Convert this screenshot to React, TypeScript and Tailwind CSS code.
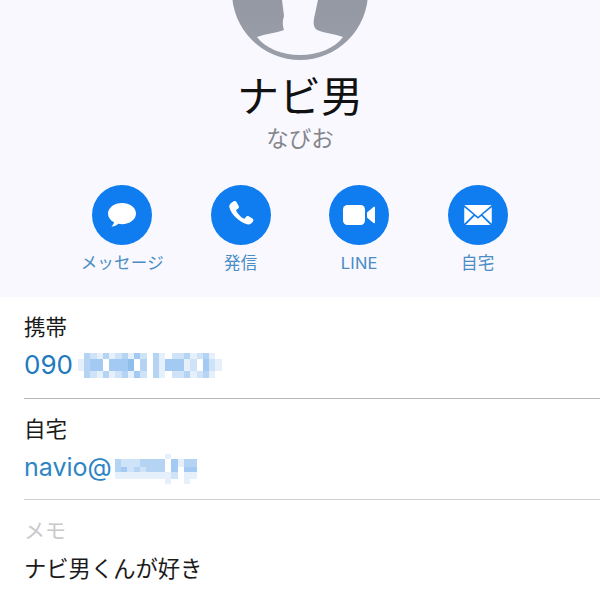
import React from "react";

const font = "font-['Inter','Noto_Sans_CJK_JP',sans-serif]";
const shades: Record<string, string> = {
  ".": "bg-transparent",
  a: "bg-[#e6f0fb]",
  b: "bg-[#cfe3f8]",
  c: "bg-[#b5d4f4]",
  d: "bg-[#a3caf2]",
  e: "bg-[#8fbdec]",
};

const phoneRows: [string, string][] = [
  [".cbacabcadb.ca.bbcabca.", "h-[6px]"],
  ["acdd.ddde.c.cadddab.dba", "h-[12px]"],
  [".cbacabcadb.ca.bbcabca.", "h-[7px]"],
];
const mailRows: [string, string][] = [
  ["........a.....", "h-[5px]"],
  ["cbbbcccc.dacc.", "h-[8px]"],
  ["cdbcbccc.d.dd.", "h-[5px]"],
  ["aaaaaaaaab.aa.", "h-[7px]"],
  ["........a..a..", "h-[5px]"],
];

function Mosaic({ rows, cell }: { rows: [string, string][]; cell: string }) {
  return (
    <div className="flex flex-col">
      {rows.map(([row, h], i) => (
        <div key={i} className={`flex ${h}`}>
          {row.split("").map((c, j) => (
            <span key={j} className={`${cell} ${shades[c]}`} />
          ))}
        </div>
      ))}
    </div>
  );
}

function Action({ label, children }: { label: string; children: React.ReactNode }) {
  return (
    <div className="flex w-[118.5px] flex-col items-center">
      <div className="flex h-[60px] w-[60px] items-center justify-center rounded-full bg-[#0f7cf0]">
        {children}
      </div>
      <div className="mt-[8px] whitespace-nowrap text-[16.5px] leading-[20px] tracking-[0.2px] text-[#4a8cc4]">{label}</div>
    </div>
  );
}

export default function App() {
  return (
    <div className={`h-[610px] w-[600px] overflow-hidden bg-white ${font}`}>
      <div className="flex h-[297px] flex-col items-center bg-[#f8f8fe]">
        <div className="h-[60px] w-full overflow-hidden">
          <svg width="600" height="60" viewBox="0 0 600 60" className="block">
            <defs>
              <linearGradient id="av" x1="0" y1="0" x2="0" y2="1">
                <stop offset="0" stopColor="#8e929d" />
                <stop offset="1" stopColor="#9a9ea8" />
              </linearGradient>
            </defs>
            <circle cx="300" cy="-8" r="68" fill="url(#av)" />
            <path
              d="M282 0 L284 16 C282 22 283 27 284 30 C276 33 265 34 257 37 C265 48 282 55 300 55 C318 55 335 48 343 37 C335 34 324 33 317 30 C313 27 313 22 315 14 L318 0 Z"
              fill="#f8f8fe"
            />
          </svg>
        </div>
        <h1 className="mt-[12px] text-[42px] font-normal leading-[50px] text-[#111111]">ナビ男</h1>
        <div className="mt-[3px] text-[22.500px] leading-[28px] text-[#85858b]">なびお</div>
        <div className="mt-[32px] flex w-full justify-center">
          <Action label="メッセージ">
            <svg width="34" height="30" viewBox="0 0 34 30">
              <path
                d="M17 3C9.300 3 3 7.700 3 13.500c0 3.700 2.300 6.900 6 8.800-.3 1.700-1.200 3.100-2.600 4.100 2.600.1 5.300-.9 7-2.600 1.100.2 2.400.4 3.600.4 7.700 0 14-4.700 14-10.700S24.700 3 17 3z"
                fill="#fff"
              />
            </svg>
          </Action>
          <Action label="発信">
            <svg width="32" height="32" viewBox="0 0 32 32">
              <path
                d="M8.800 2.200c1-.5 2.100-.2 2.700.8l2.200 3.900c.5.900.3 1.900-.5 2.600l-1.700 1.300c-.4.300-.4.700-.2 1.100 1.700 3.200 4.200 5.900 7.300 7.700.4.200.8.200 1.100-.2l1.400-1.700c.7-.8 1.700-1 2.600-.5l3.700 2.300c1 .6 1.300 1.800.7 2.800-1.100 1.900-3 3.500-5.200 3.200C14.800 23.900 5.800 14.900 4.300 8c-.4-2.400 2.300-4.800 4.500-5.800z"
                fill="#fff"
              />
            </svg>
          </Action>
          <Action label="LINE">
            <svg width="34" height="22" viewBox="0 0 34 22">
              <rect x="1" y="1" width="22" height="20" rx="4.500" fill="#fff" />
              <path d="M25 8.500 31.500 3c.7-.5 1.500 0 1.500.8v14.400c0 .8-.8 1.300-1.500.8L25 13.500z" fill="#fff" />
            </svg>
          </Action>
          <Action label="自宅">
            <svg width="30" height="22" viewBox="0 0 32 24">
              <path d="M1 1h30L16 14z" fill="#fff" />
              <path d="M1 3.500v18l10-9.700z" fill="#fff" />
              <path d="M31 3.500v18l-10-9.700z" fill="#fff" />
              <path d="M2.500 23 12.300 13l3.700 3.200 3.700-3.200 9.800 10z" fill="#fff" />
            </svg>
          </Action>
        </div>
      </div>

      <div className="pl-[24px]">
        <div className="h-[102px] border-b border-[#b5b5b8]">
          <div className="pt-[17px] text-[21.500px] leading-[27px] text-[#1a1a1a]">携帯</div>
          <div className="mt-[7px] flex items-center">
            <span className="text-[26px] leading-[34px] text-[#2079c0]">090</span>
            <div className="ml-[5px]">
              <Mosaic rows={phoneRows} cell="w-[6.260px]" />
            </div>
          </div>
        </div>
        <div className="h-[101px] border-b border-[#cfcfd2]">
          <div className="pt-[17px] text-[21.500px] leading-[27px] text-[#1a1a1a]">自宅</div>
          <div className="mt-[7px] flex items-center">
            <span className="text-[25px] leading-[34px] text-[#2e85c4]">navio@</span>
            <div className="ml-[3px] mt-[4px]">
              <Mosaic rows={mailRows} cell="w-[6.300px]" />
            </div>
          </div>
        </div>
        <div className="pt-[17px] text-[21px] leading-[27px] text-[#c9c9cc]">メモ</div>
        <div className="mt-[11px] text-[22.300px] leading-[28px] text-[#1a1a1a]">ナビ男くんが好き</div>
      </div>
    </div>
  );
}
